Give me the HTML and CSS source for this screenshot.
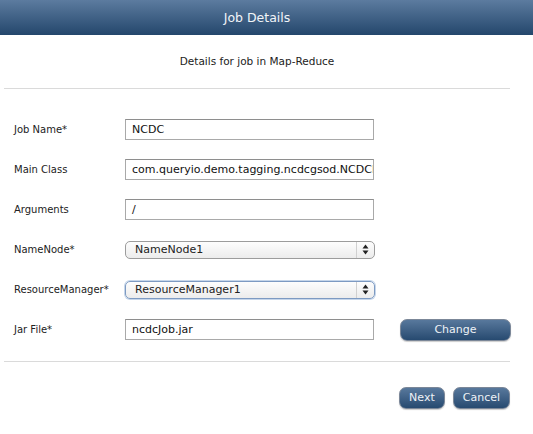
FILE: index.html
```html
<!DOCTYPE html>
<html>
<head>
<meta charset="utf-8">
<link rel="stylesheet" href="styles.css">
</head>
<body>
<div class="header"><span class="title">Job Details</span></div>
<div class="subtitle">Details for job in Map-Reduce</div>
<hr class="rule">
<div class="form">
  <div class="row">
    <div class="label">Job Name*</div>
    <div class="field"><span class="input">NCDC</span></div>
  </div>
  <div class="row">
    <div class="label">Main Class</div>
    <div class="field"><span class="input">com.queryio.demo.tagging.ncdcgsod.NCDCPostProcessor</span></div>
  </div>
  <div class="row">
    <div class="label">Arguments</div>
    <div class="field"><span class="input">/</span></div>
  </div>
  <div class="row">
    <div class="label">NameNode*</div>
    <div class="field"><span class="select"><span class="sel-text">NameNode1</span><span class="arrows"><svg width="7" height="11" viewBox="0 0 7 11"><path d="M3.5 0.5 L6.5 4.5 L0.5 4.5 Z M3.5 10.5 L6.5 6.5 L0.5 6.5 Z" fill="#222"/></svg></span></span></div>
  </div>
  <div class="row">
    <div class="label">ResourceManager*</div>
    <div class="field"><span class="select focus"><span class="sel-text">ResourceManager1</span><span class="arrows"><svg width="7" height="11" viewBox="0 0 7 11"><path d="M3.5 0.5 L6.5 4.5 L0.5 4.5 Z M3.5 10.5 L6.5 6.5 L0.5 6.5 Z" fill="#222"/></svg></span></span></div>
  </div>
  <div class="row">
    <div class="label">Jar File*</div>
    <div class="field"><span class="input">ncdcJob.jar</span></div>
    <span class="btn change">Change</span>
  </div>
</div>
<hr class="rule bottom">
<div class="actions">
  <span class="btn">Next</span>
  <span class="btn">Cancel</span>
</div>
</body>
</html>
```
FILE: styles.css
```css
html, body { margin: 0; padding: 0; background: #fff; }
body {
  font-family: "DejaVu Sans", "Liberation Sans", sans-serif;
  font-size: 10.5px;
  color: #222;
  width: 533px;
  height: 434px;
  overflow: hidden;
}
.header {
  height: 35px;
  line-height: 35px;
  background: linear-gradient(#5c7b9f, #24476c);
  color: #f2f5f8;
  text-align: center;
  font-size: 12.5px;
  padding-right: 19px;
}
.subtitle {
  text-align: center;
  padding-top: 20px;
  padding-right: 19px;
  height: 33px;
  line-height: 13px;
  font-size: 10.5px;
}
.rule {
  margin: 0 23px 0 4px;
  border: 0;
  border-top: 1px solid #dadada;
  height: 0;
}
.form {
  padding: 30px 0 0 14px;
  display: flex;
  flex-direction: column;
  gap: 19px;
}
.row {
  display: flex;
  align-items: center;
  height: 21px;
}
.label {
  width: 111px;
  font-size: 10px;
}
.field { width: 250px; }
.input {
  display: block;
  box-sizing: border-box;
  width: 249px;
  height: 21px;
  border: 1px solid #a9a9a9;
  border-top-color: #8e8e8e;
  padding: 0 6px;
  line-height: 19px;
  font-size: 11px;
  color: #111;
  white-space: nowrap;
  overflow: hidden;
}
.select {
  display: flex;
  box-sizing: border-box;
  width: 250px;
  height: 18px;
  border: 1px solid #9c9c9c;
  border-radius: 5px;
  background: linear-gradient(#fdfdfd, #ececec);
  font-size: 11px;
  align-items: center;
}
.select.focus { border-color: #7d9ac2; box-shadow: 0 0 0 1px #c6d6ea; }
.sel-text { flex: 1; padding-left: 9px; line-height: 16px; }
.arrows {
  width: 17px;
  height: 16px;
  border-left: 1px solid #d0d0d0;
  display: flex;
  align-items: center;
  justify-content: center;
}
.btn {
  display: inline-block;
  box-sizing: border-box;
  height: 22px;
  line-height: 20px;
  padding: 0 9px;
  border: 1px solid #7b8798;
  border-radius: 7px;
  background: linear-gradient(#58789c, #274a70);
  color: #eef2f7;
  font-size: 11px;
  text-align: center;
  box-shadow: 0 1px 1px rgba(0,0,0,0.2);
}
.change { width: 111px; margin-left: 25px; }
.bottom { margin-top: 21px; }
.actions {
  display: flex;
  justify-content: flex-end;
  gap: 8px;
  padding: 25px 23px 0 0;
}
```
